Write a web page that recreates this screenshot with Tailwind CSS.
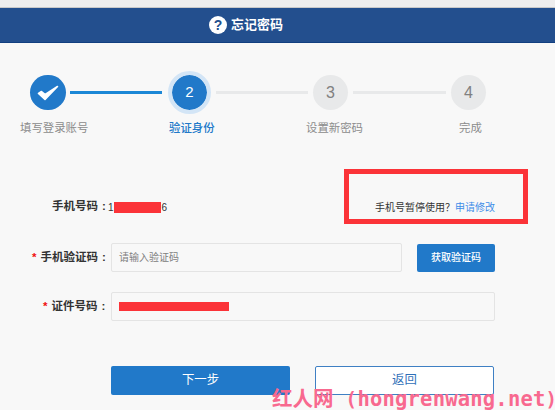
<!DOCTYPE html>
<html lang="zh">
<head>
<meta charset="utf-8">
<script src="https://cdn.jsdelivr.net/npm/@tailwindcss/browser@4"></script>
</head>
<body class="bg-white font-['Liberation_Sans','Noto_Sans_CJK_SC',sans-serif]">
<div class="relative w-[557px] h-[410px] overflow-hidden bg-white">
  <div class="w-[555px] h-[410px] bg-[#f8f8f8]">
    <div class="h-[8px] bg-[#eeeeee] border-b border-[#c9c9c9]"></div>
    <header class="h-[35px] bg-[#234f8e] border-b border-[#123f80] flex items-center pl-[209px] gap-[4px]">
      <span class="w-[18px] h-[18px] rounded-full bg-white text-[#234f8e] text-[14px] font-bold leading-[18px] text-center">?</span>
      <span class="text-white text-[13px] font-bold">忘记密码</span>
    </header>

    <div class="flex items-center pl-[30px] pt-[32px] h-[67px]">
      <div class="w-[36px] h-[35px] rounded-full bg-[#2179c9] flex items-center justify-center">
        <svg width="24" height="20" viewBox="0 0 24 20"><path d="M2.5 10.5 L9 16.5 L21.5 3.5 L9.2 11.5 L5.5 8.5 Z" fill="#fff" stroke="#fff" stroke-width="1.6" stroke-linejoin="round"/></svg>
      </div>
      <div class="ml-[4px] w-[92px] h-[3px] bg-[#1b87d6]"></div>
      <div class="ml-[6px] w-[43px] h-[43px] shrink-0 rounded-full border-[4px] border-[#d3e5f6] bg-[#2179c9] bg-clip-padding text-white text-[15px] flex items-center justify-center">2</div>
      <div class="ml-[5px] w-[92px] h-[3px] bg-[#e8e9ea]"></div>
      <div class="ml-[5px] w-[35px] h-[35px] rounded-full bg-[#e8e9ea] text-[#808080] text-[16px] flex items-center justify-center">3</div>
      <div class="ml-[5px] w-[93px] h-[3px] bg-[#e8e9ea]"></div>
      <div class="ml-[5px] w-[35px] h-[35px] rounded-full bg-[#e8e9ea] text-[#808080] text-[16px] flex items-center justify-center">4</div>
    </div>

    <div class="flex pl-[20px] pt-[10px] text-[11.4px] leading-[16px] text-[#8c8c8c]">
      <span class="w-[149px]">填写登录账号</span>
      <span class="w-[137px] text-[#2179c9] font-medium">验证身份</span>
      <span class="w-[153px]">设置新密码</span>
      <span>完成</span>
    </div>

    <div class="flex items-center h-[16px] mt-[63px] text-[11.5px] text-[#333333]">
      <span class="w-[108px] pl-[52px] font-bold whitespace-nowrap">手机号码<span class="ml-[4px]">:</span></span>
      <span class="text-[10px] w-[5.5px]">1</span>
      <span class="w-[47px] h-[11px] bg-[#fb3338]"></span>
      <span class="text-[10px] ml-[1px]">6</span>
      <span class="ml-[208px] text-[10px] whitespace-nowrap">手机号暂停使用？<span class="text-[#3f8de8]">申请修改</span></span>
    </div>

    <div class="flex items-center h-[29px] mt-[28px]">
      <span class="w-[105px] pl-[32px] font-bold text-[11.5px] text-[#333333] whitespace-nowrap"><span class="text-[#f01010] mr-[4px]">*</span>手机验证码<span class="ml-[4px]">:</span></span>
      <div class="ml-[6px] w-[291px] h-[29px] border border-[#e4e4e4] rounded-[2px] flex items-center pl-[7px] text-[10px] text-[#808080]">请输入验证码</div>
      <button class="ml-[15px] w-[78px] h-[28px] rounded-[2px] bg-[#2179c9] text-white text-[10px] font-medium">获取验证码</button>
    </div>

    <div class="flex items-center h-[29px] mt-[20px]">
      <span class="w-[105px] pl-[43px] font-bold text-[11.5px] text-[#333333] whitespace-nowrap"><span class="text-[#f01010] mr-[4px]">*</span>证件号码<span class="ml-[4px]">:</span></span>
      <div class="ml-[6px] w-[384px] h-[29px] border border-[#e4e4e4] rounded-[2px] flex items-center pl-[7px]">
        <span class="w-[110px] h-[9px] bg-[#fb3338]"></span>
      </div>
    </div>

    <div class="flex pl-[111px] mt-[45px] gap-[25px]">
      <button class="w-[179px] h-[29px] rounded-[2px] bg-[#2179c9] text-white text-[12.4px]">下一步</button>
      <button class="w-[179px] h-[29px] rounded-[2px] border border-[#3f80c4] bg-white text-[#2f6fb8] text-[12.4px]">返回</button>
    </div>
  </div>

  <div class="absolute left-[344px] top-[169px] w-[184px] h-[55px] border-[5px] border-[#fb3338]"></div>
  <div class="absolute left-[272px] top-[388px] flex w-[285px] h-[22px] text-[20.5px] leading-[22px] font-bold text-[#f8698f] whitespace-nowrap font-['DejaVu_Sans_Mono','Noto_Sans_CJK_SC',monospace]">
    <span>红人网</span>
    <span class="w-[24px] pl-[12px] text-[19px]">(</span>
    <span class="tracking-[0.2px]">hongrenwang.net</span>
    <span class="text-[19px]">)</span>
  </div>
</div>
</body>
</html>
